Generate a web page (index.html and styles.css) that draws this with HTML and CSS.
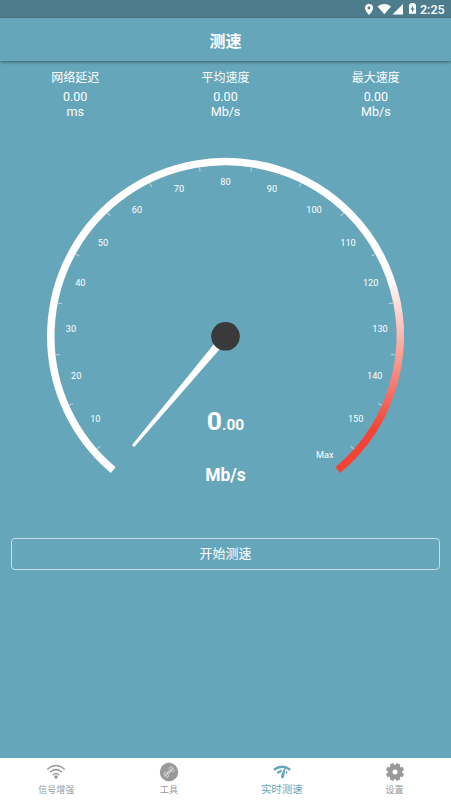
FILE: index.html
```
<!DOCTYPE html>
<html lang="zh">
<head>
<meta charset="utf-8">
<title>测速</title>
<link rel="stylesheet" href="styles.css">
</head>
<body>
<div class="status">
  <svg class="status-icons" viewBox="0 0 56 18" width="56" height="18">
    <path fill-rule="evenodd" d="M5 4a4 4 0 0 0-4 4c0 3 4 7 4 7s4-4 4-7a4 4 0 0 0-4-4zm0 2.600a1.400 1.400 0 1 1 0 2.800 1.400 1.400 0 0 1 0-2.800z"/>
    <path d="M13.600 6.500Q20.200 1.700 27 6.500L20.300 14.300z"/>
    <path d="M39 4v10.500H28.500z"/>
    <path fill-rule="evenodd" d="M46.500 3h4v1.200H52V13.800h-7V4.200h1.500zM49 5.500l-2.500 4h1.600v3l2.500-4H49z"/>
  </svg>
  <span class="clock">2:25</span>
</div>
<header class="bar">测速</header>
<main class="main">
  <section class="stats">
    <div class="stat"><h2>网络延迟</h2><p>0.00</p><p>ms</p></div>
    <div class="stat"><h2>平均速度</h2><p>0.00</p><p>Mb/s</p></div>
    <div class="stat"><h2>最大速度</h2><p>0.00</p><p>Mb/s</p></div>
  </section>
  <svg class="gauge" viewBox="0 0 451 340" width="451" height="340">
    <defs>
      <linearGradient id="heat" gradientUnits="userSpaceOnUse" x1="0" y1="-60" x2="0" y2="93">
        <stop offset="0" stop-color="#fff"/>
        <stop offset="1" stop-color="#f44336"/>
      </linearGradient>
    </defs>
    <g transform="translate(225.500 186.300)">
      <path class="arc" d="M-112.300 133.800A174.700 174.700 0 1 1 164.160 -59.750"/>
      <path class="arc heat" d="M164.160 -59.750A174.700 174.700 0 0 1 112.300 133.800"/>
      <path class="minor" pathLength="280" d="M-108.500 129.300A168.800 168.800 0 1 1 108.500 129.300"/>
      <path class="major" pathLength="280" d="M-108.160 128.900A168.270 168.270 0 1 1 108.160 128.900"/>
      <g class="labels">
        <text x="-130.200" y="85.500">10</text>
        <text x="-149.300" y="43">20</text>
        <text x="-154.500" y="-4">30</text>
        <text x="-145.200" y="-50">40</text>
        <text x="-122.500" y="-90.500">50</text>
        <text x="-88.500" y="-123">60</text>
        <text x="-46.500" y="-144">70</text>
        <text x="0" y="-151.500">80</text>
        <text x="46.500" y="-144">90</text>
        <text x="88.500" y="-123">100</text>
        <text x="122.500" y="-90.500">110</text>
        <text x="145.200" y="-50">120</text>
        <text x="154.500" y="-4">130</text>
        <text x="149.300" y="43">140</text>
        <text x="130.200" y="85.500">150</text>
        <text x="99.300" y="121.500">Max</text>
      </g>
      <path class="needle" d="M3.100 2.600L-91 110.500Q-93.500 110.500-93 108.300L-3.100-2.600z"/>
      <circle class="hub" r="14.300"/>
      <text class="value" x="0" y="93.700">0<tspan class="decimal">.00</tspan></text>
      <text class="unit" x="0" y="144.500">Mb/s</text>
    </g>
  </svg>
  <button class="start">开始测速</button>
</main>
<nav class="tabs">
  <div class="tab">
    <svg viewBox="0 0 20 20" width="20" height="20"><g class="waves"><path d="M1.300 7.500Q10 -.5 18.700 7.500M4.100 10.300Q10 4.900 15.900 10.300M6.800 13Q10 10 13.200 13"/></g><circle cx="10" cy="15" r="1.800"/></svg>
    <span>信号增强</span>
  </div>
  <div class="tab">
    <svg viewBox="0 0 20 20" width="20" height="20"><circle cx="10" cy="10" r="9.200"/><g class="chain" transform="rotate(-42 10 10)"><circle cx="6.200" cy="8.800" r="1.500"/><circle cx="6.200" cy="11.500" r="1.500"/><circle cx="10" cy="10" r="1.300"/><circle cx="13.800" cy="8.500" r="1.500"/><circle cx="13.800" cy="11.200" r="1.500"/><path d="M4 10h12"/></g></svg>
    <span>工具</span>
  </div>
  <div class="tab active">
    <svg viewBox="0 0 20 20" width="20" height="20"><path d="M1 7Q10 .2 19 7L17.200 8.800Q15.300 7.200 13.500 6.500L12 15.300Q11.500 16.700 10 16.300Q8.400 15.600 9 14L12.200 6.100Q7 5.300 2.800 8.800zM4.500 10.300Q7 8 10.200 7.800L9.200 10.500Q7.500 10.900 6.300 12.100zM14.200 8.800L15.800 10.300 14 12 13.600 11.700z"/></svg>
    <span>实时测速</span>
  </div>
  <div class="tab">
    <svg viewBox="0 0 20 20" width="20" height="20"><g class="teeth"><path d="M10 10L6.500 1.700M10 10L13.500 1.700M10 10L18.300 6.500M10 10L18.300 13.500M10 10L13.500 18.300M10 10L6.500 18.300M10 10L1.700 13.500M10 10L1.700 6.500"/></g><circle cx="10" cy="10" r="7.300"/><circle class="hole" cx="10" cy="10" r="2.500"/></svg>
    <span>设置</span>
  </div>
</nav>
</body>
</html>
```
FILE: styles.css
```
* { box-sizing: border-box; }
body {
  margin: 0;
  height: 800px;
  display: flex;
  flex-direction: column;
  overflow: hidden;
  background: #66a6bb;
  color: #fff;
  font-family: Roboto, "Noto Sans CJK SC", sans-serif;
}
.status {
  height: 18px;
  flex: none;
  display: flex;
  justify-content: flex-end;
  padding-right: 6px;
  background: #4d7d8d;
}
.status-icons { fill: #fff; }
.clock { font-size: 12.500px; line-height: 19px; font-weight: 500; width: 25px; white-space: nowrap; }
.bar {
  height: 43px;
  flex: none;
  font-size: 16px;
  line-height: 47px;
  font-weight: 700;
  text-align: center;
  box-shadow: 0 1px 3px rgba(0, 0, 0, .45);
}
.main { flex: 1; display: flex; flex-direction: column; }
.stats { display: flex; height: 89px; padding-top: 7px; }
.stat { flex: 1; text-align: center; }
.stat h2 { margin: 0 0 2px; font-size: 12px; line-height: 20px; font-weight: 400; }
.stat p { margin: 0; font-size: 12.500px; line-height: 14.500px; }
.gauge { display: block; flex: none; }
.arc { fill: none; stroke: #fff; stroke-width: 7.500; }
.heat { stroke: url(#heat); }
.minor, .major { fill: none; }
.minor { stroke: #c2d1d5; stroke-width: 4.500; stroke-dasharray: .34 17.160; stroke-dashoffset: -8.580; }
.major { stroke: #959da0; stroke-width: 5.500; stroke-dasharray: .34 17.160; stroke-dashoffset: .17; }
.labels { font-size: 9.200px; fill: #fff; text-anchor: middle; }
.needle { fill: #fff; }
.hub { fill: #3a3a3a; }
.value, .unit { fill: #fff; font-weight: 700; text-anchor: middle; }
.value { font-size: 26.500px; }
.decimal { font-size: 15.500px; }
.unit { font-size: 17.500px; }
.start {
  width: 429px;
  height: 32px;
  margin: 48px 0 0 11px;
  padding: 0;
  border: 1px solid #c5dfe8;
  border-radius: 4px;
  background: none;
  color: #fff;
  font: 400 13px/30px Roboto, "Noto Sans CJK SC", sans-serif;
}
.tabs {
  height: 42px;
  flex: none;
  display: flex;
  background: #fff;
  color: #999;
}
.tab {
  flex: 1;
  display: flex;
  flex-direction: column;
  align-items: center;
  padding-top: 4px;
  font-size: 9px;
  line-height: 14px;
}
.tab svg { display: block; fill: currentColor; margin-bottom: 1px; }
.active { color: #66a6bb; font-size: 10.500px; line-height: 13px; }
.waves { fill: none; stroke: currentColor; stroke-width: 1.500; }
.chain { fill: none; stroke: #ddd; stroke-width: .8; }
.teeth { stroke: currentColor; stroke-width: 4; }
.tab .hole { fill: #fff; }
```
